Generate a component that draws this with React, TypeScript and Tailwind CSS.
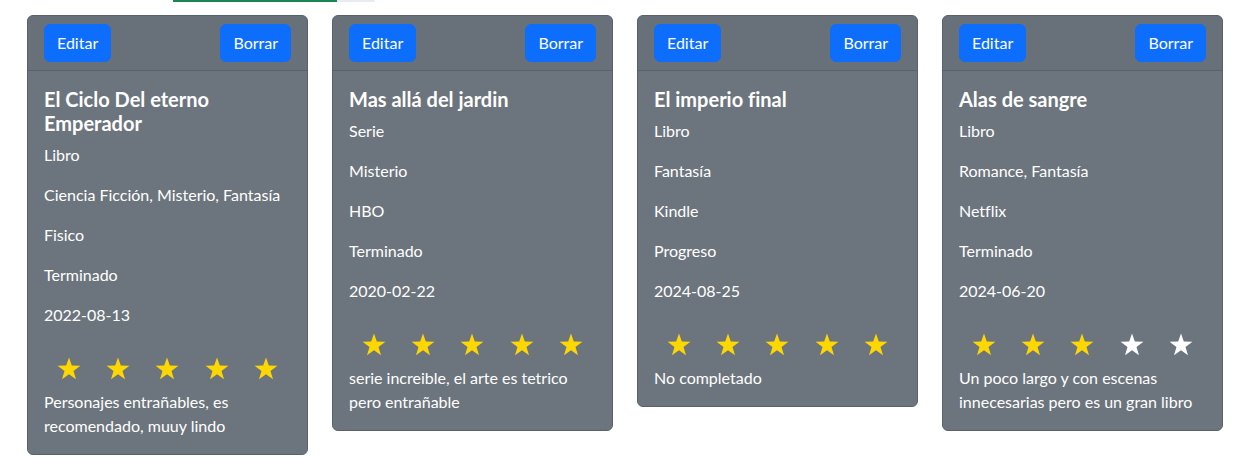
type Item = {
  title: string;
  lines: string[];
  stars: number;
  comment: string;
};

const items: Item[] = [
  {
    title: "El Ciclo Del eterno Emperador",
    lines: ["Libro", "Ciencia Ficción, Misterio, Fantasía", "Fisico", "Terminado", "2022-08-13"],
    stars: 5,
    comment: "Personajes entrañables, es recomendado, muuy lindo",
  },
  {
    title: "Mas allá del jardin",
    lines: ["Serie", "Misterio", "HBO", "Terminado", "2020-02-22"],
    stars: 5,
    comment: "serie increible, el arte es tetrico pero entrañable",
  },
  {
    title: "El imperio final",
    lines: ["Libro", "Fantasía", "Kindle", "Progreso", "2024-08-25"],
    stars: 5,
    comment: "No completado",
  },
  {
    title: "Alas de sangre",
    lines: ["Libro", "Romance, Fantasía", "Netflix", "Terminado", "2024-06-20"],
    stars: 3,
    comment: "Un poco largo y con escenas innecesarias pero es un gran libro",
  },
];

function Star({ filled }: { filled: boolean }) {
  return (
    <svg width="24" height="23" viewBox="0 0 24 23">
      <path
        d="M12 0.5 L14.8 8.6 L23.4 8.7 L16.5 13.9 L19 22.3 L12 17.3 L5 22.3 L7.5 13.9 L0.6 8.7 L9.2 8.6 Z"
        fill={filled ? "#ffd700" : "#ffffff"}
      />
    </svg>
  );
}

function Card({ item }: { item: Item }) {
  return (
    <div className="bg-[#6c757d] border border-[#5a6168] rounded-md text-white">
      <div className="flex justify-between px-4 py-2 border-b border-[#5a6168] bg-black/[.03]">
        <button className="bg-[#0d6efd] border border-[#0d6efd] rounded-md px-3 py-1.5 text-base leading-6 text-white">
          Editar
        </button>
        <button className="bg-[#0d6efd] border border-[#0d6efd] rounded-md px-3 py-1.5 text-base leading-6 text-white">
          Borrar
        </button>
      </div>
      <div className="p-4">
        <h5 className="text-xl font-bold leading-6 mb-2">{item.title}</h5>
        {item.lines.map((l) => (
          <p key={l} className="leading-6 mb-4">
            {l}
          </p>
        ))}
        <div className="flex justify-around items-center h-[47px] pt-[3px]">
          {[0, 1, 2, 3, 4].map((i) => (
            <Star key={i} filled={i < item.stars} />
          ))}
        </div>
        <p className="leading-6">{item.comment}</p>
      </div>
    </div>
  );
}

export default function App() {
  return (
    <div
      className="bg-white min-h-screen text-base [font-variant-ligatures:none]"
      style={{ fontFamily: 'Lato, "Liberation Sans", sans-serif' }}
    >
      <div className="flex h-[2px]">
        <div className="ml-[173px] w-[164px] bg-[#198754]"></div>
        <div className="w-[38px] bg-[#e9ecef] rounded-br-sm"></div>
      </div>
      <div className="grid grid-cols-4 gap-6 items-start w-[1196px] ml-[27px] mt-[13px]">
        {items.map((it) => (
          <Card key={it.title} item={it} />
        ))}
      </div>
    </div>
  );
}
